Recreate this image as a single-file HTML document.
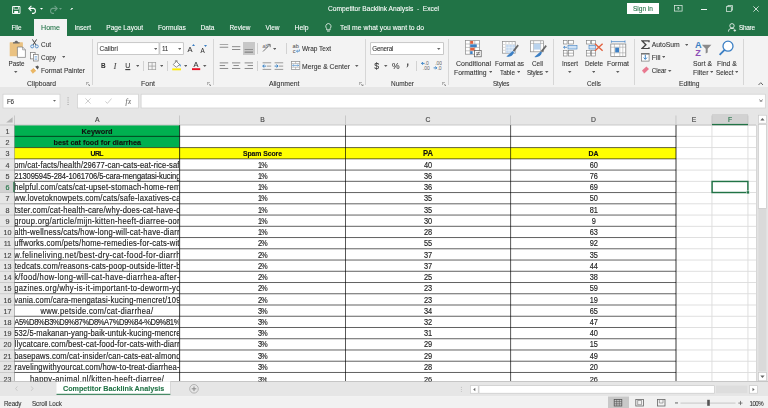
<!DOCTYPE html>
<html lang="en"><head><meta charset="utf-8"><title>Competitor Backlink Analysis - Excel</title>
<style>
html,body{margin:0;padding:0;}
body{width:768px;height:408px;overflow:hidden;background:#fff;font-family:"Liberation Sans", sans-serif;}
#app{position:relative;width:768px;height:408px;overflow:hidden;}
#app>div,#app>svg,#tx>span{position:absolute;display:block;}
#tx{left:0;top:0;width:768px;height:408px;will-change:transform;}
#tx>span{white-space:pre;-webkit-text-stroke:0.08px currentColor;line-height:10px;height:10px;transform:scaleY(1.08);transform-origin:50% 72%;}
</style></head><body><div id="app">
<div style="left:0px;top:0px;width:768px;height:36px;background:#217346;"></div>
<div style="left:0px;top:36px;width:768px;height:51px;background:#f3f3f3;"></div>
<div style="left:0px;top:87px;width:768px;height:27px;background:#e6e6e6;"></div>
<div style="left:34px;top:19px;width:33px;height:17px;background:#f3f3f3;"></div>
<svg style="left:0px;top:0px" width="768" height="112" viewBox="0 0 768 112"><rect x="3" y="94.2" width="57" height="13.8" fill="#fff" stroke="#cfcfcf" stroke-width="0.7"/><rect x="77.6" y="94.2" width="60.8" height="13.8" fill="#fff" stroke="#cfcfcf" stroke-width="0.7"/><rect x="141.1" y="94.2" width="624.2" height="13.8" fill="#fff" stroke="#cfcfcf" stroke-width="0.7"/></svg>
<svg style="left:0px;top:0px" width="768" height="408" viewBox="0 0 768 408"><rect x="0" y="114" width="768" height="267.4" fill="#e6e6e6"/><rect x="14.6" y="125.15" width="741.9" height="256.25" fill="#fff"/><rect x="712.0" y="114" width="36.0" height="10.4" fill="#d2d2d2"/><rect x="0" y="181.37" width="14.0" height="11.244" fill="#d2d2d2"/><rect x="13.299999999999999" y="181.37" width="1.4" height="11.244" fill="#217346"/><rect x="14.6" y="125.15" width="165.0" height="22.488" fill="#00b050"/><rect x="14.6" y="147.64" width="661.4" height="11.244" fill="#ffff00"/><rect x="676.0" y="124.65" width="80.5" height="0.9" fill="#dcdcdc"/><rect x="676.0" y="135.89" width="80.5" height="0.9" fill="#dcdcdc"/><rect x="676.0" y="147.14" width="80.5" height="0.9" fill="#dcdcdc"/><rect x="676.0" y="158.38" width="80.5" height="0.9" fill="#dcdcdc"/><rect x="676.0" y="169.63" width="80.5" height="0.9" fill="#dcdcdc"/><rect x="676.0" y="180.87" width="80.5" height="0.9" fill="#dcdcdc"/><rect x="676.0" y="192.11" width="80.5" height="0.9" fill="#dcdcdc"/><rect x="676.0" y="203.36" width="80.5" height="0.9" fill="#dcdcdc"/><rect x="676.0" y="214.6" width="80.5" height="0.9" fill="#dcdcdc"/><rect x="676.0" y="225.85" width="80.5" height="0.9" fill="#dcdcdc"/><rect x="676.0" y="237.09" width="80.5" height="0.9" fill="#dcdcdc"/><rect x="676.0" y="248.33" width="80.5" height="0.9" fill="#dcdcdc"/><rect x="676.0" y="259.58" width="80.5" height="0.9" fill="#dcdcdc"/><rect x="676.0" y="270.82" width="80.5" height="0.9" fill="#dcdcdc"/><rect x="676.0" y="282.07" width="80.5" height="0.9" fill="#dcdcdc"/><rect x="676.0" y="293.31" width="80.5" height="0.9" fill="#dcdcdc"/><rect x="676.0" y="304.55" width="80.5" height="0.9" fill="#dcdcdc"/><rect x="676.0" y="315.8" width="80.5" height="0.9" fill="#dcdcdc"/><rect x="676.0" y="327.04" width="80.5" height="0.9" fill="#dcdcdc"/><rect x="676.0" y="338.29" width="80.5" height="0.9" fill="#dcdcdc"/><rect x="676.0" y="349.53" width="80.5" height="0.9" fill="#dcdcdc"/><rect x="676.0" y="360.77" width="80.5" height="0.9" fill="#dcdcdc"/><rect x="676.0" y="372.02" width="80.5" height="0.9" fill="#dcdcdc"/><rect x="711.5" y="125.15" width="0.9" height="256.25" fill="#dcdcdc"/><rect x="747.5" y="125.15" width="0.9" height="256.25" fill="#dcdcdc"/><rect x="14.1" y="115.5" width="0.9" height="9.5" fill="#c4c4c4"/><rect x="179.1" y="115.5" width="0.9" height="9.5" fill="#c4c4c4"/><rect x="345.0" y="115.5" width="0.9" height="9.5" fill="#c4c4c4"/><rect x="510.1" y="115.5" width="0.9" height="9.5" fill="#c4c4c4"/><rect x="675.5" y="115.5" width="0.9" height="9.5" fill="#c4c4c4"/><rect x="711.5" y="115.5" width="0.9" height="9.5" fill="#c4c4c4"/><rect x="747.5" y="115.5" width="0.9" height="9.5" fill="#c4c4c4"/><rect x="0" y="124.6" width="756.5" height="0.8" fill="#c0c0c0"/><rect x="0" y="135.94" width="14.6" height="0.8" fill="#c4c4c4"/><rect x="0" y="147.19" width="14.6" height="0.8" fill="#c4c4c4"/><rect x="0" y="158.43" width="14.6" height="0.8" fill="#c4c4c4"/><rect x="0" y="169.68" width="14.6" height="0.8" fill="#c4c4c4"/><rect x="0" y="180.92000000000002" width="14.6" height="0.8" fill="#c4c4c4"/><rect x="0" y="192.16000000000003" width="14.6" height="0.8" fill="#c4c4c4"/><rect x="0" y="203.41000000000003" width="14.6" height="0.8" fill="#c4c4c4"/><rect x="0" y="214.65" width="14.6" height="0.8" fill="#c4c4c4"/><rect x="0" y="225.9" width="14.6" height="0.8" fill="#c4c4c4"/><rect x="0" y="237.14000000000001" width="14.6" height="0.8" fill="#c4c4c4"/><rect x="0" y="248.38000000000002" width="14.6" height="0.8" fill="#c4c4c4"/><rect x="0" y="259.63" width="14.6" height="0.8" fill="#c4c4c4"/><rect x="0" y="270.87" width="14.6" height="0.8" fill="#c4c4c4"/><rect x="0" y="282.12" width="14.6" height="0.8" fill="#c4c4c4"/><rect x="0" y="293.36" width="14.6" height="0.8" fill="#c4c4c4"/><rect x="0" y="304.6" width="14.6" height="0.8" fill="#c4c4c4"/><rect x="0" y="315.85" width="14.6" height="0.8" fill="#c4c4c4"/><rect x="0" y="327.09000000000003" width="14.6" height="0.8" fill="#c4c4c4"/><rect x="0" y="338.34000000000003" width="14.6" height="0.8" fill="#c4c4c4"/><rect x="0" y="349.58" width="14.6" height="0.8" fill="#c4c4c4"/><rect x="0" y="360.82" width="14.6" height="0.8" fill="#c4c4c4"/><rect x="0" y="372.07" width="14.6" height="0.8" fill="#c4c4c4"/><rect x="14.6" y="135.83999999999997" width="661.4" height="1" fill="#000" fill-opacity="0.62"/><rect x="14.6" y="147.08999999999997" width="661.4" height="1" fill="#000" fill-opacity="0.62"/><rect x="14.6" y="158.32999999999998" width="661.4" height="1" fill="#000" fill-opacity="0.62"/><rect x="14.6" y="169.57999999999998" width="661.4" height="1" fill="#000" fill-opacity="0.62"/><rect x="14.6" y="180.82" width="661.4" height="1" fill="#000" fill-opacity="0.62"/><rect x="14.6" y="192.06" width="661.4" height="1" fill="#000" fill-opacity="0.62"/><rect x="14.6" y="203.31" width="661.4" height="1" fill="#000" fill-opacity="0.62"/><rect x="14.6" y="214.54999999999998" width="661.4" height="1" fill="#000" fill-opacity="0.62"/><rect x="14.6" y="225.79999999999998" width="661.4" height="1" fill="#000" fill-opacity="0.62"/><rect x="14.6" y="237.04" width="661.4" height="1" fill="#000" fill-opacity="0.62"/><rect x="14.6" y="248.28" width="661.4" height="1" fill="#000" fill-opacity="0.62"/><rect x="14.6" y="259.53" width="661.4" height="1" fill="#000" fill-opacity="0.62"/><rect x="14.6" y="270.77" width="661.4" height="1" fill="#000" fill-opacity="0.62"/><rect x="14.6" y="282.02" width="661.4" height="1" fill="#000" fill-opacity="0.62"/><rect x="14.6" y="293.26" width="661.4" height="1" fill="#000" fill-opacity="0.62"/><rect x="14.6" y="304.5" width="661.4" height="1" fill="#000" fill-opacity="0.62"/><rect x="14.6" y="315.75" width="661.4" height="1" fill="#000" fill-opacity="0.62"/><rect x="14.6" y="326.99" width="661.4" height="1" fill="#000" fill-opacity="0.62"/><rect x="14.6" y="338.24" width="661.4" height="1" fill="#000" fill-opacity="0.62"/><rect x="14.6" y="349.47999999999996" width="661.4" height="1" fill="#000" fill-opacity="0.62"/><rect x="14.6" y="360.71999999999997" width="661.4" height="1" fill="#000" fill-opacity="0.62"/><rect x="14.6" y="371.96999999999997" width="661.4" height="1" fill="#000" fill-opacity="0.62"/><rect x="14.2" y="125.15" width="0.8" height="256.25" fill="#000" fill-opacity="0.3"/><rect x="179.075" y="125.15" width="1.05" height="256.25" fill="#000" fill-opacity="0.72"/><rect x="345.0" y="125.15" width="1.0" height="256.25" fill="#000" fill-opacity="0.65"/><rect x="510.1" y="125.15" width="1.0" height="256.25" fill="#000" fill-opacity="0.65"/><rect x="675.45" y="125.15" width="1.1" height="256.25" fill="#000" fill-opacity="0.7"/><rect x="712.0" y="123.9" width="36.0" height="1.3" fill="#217346"/><path d="M12.6 117.2V122.6H6.2Z" fill="#b4b4b4"/><rect x="712.1" y="181.47" width="35.8" height="11.044" fill="none" stroke="#217346" stroke-width="1.45"/><rect x="746.3" y="190.91000000000003" width="3" height="3" fill="#217346" stroke="#fff" stroke-width="0.5"/></svg>
<div style="left:756px;top:114px;width:12px;height:268px;background:#e6e6e6;"></div>
<svg style="left:0px;top:0px" width="768" height="408" viewBox="0 0 768 408"><rect x="756.3" y="125" width="0.8" height="256.4" fill="#cfcfcf"/><rect x="758.4" y="208.3" width="8" height="163" fill="#dadada"/><rect x="758.6" y="115.2" width="7.7" height="8" fill="#fff" stroke="#c4c4c4" stroke-width="0.6"/><rect x="758.6" y="124.6" width="7.7" height="83.7" fill="#fff" stroke="#c4c4c4" stroke-width="0.6"/><rect x="758.6" y="372.6" width="7.7" height="8.2" fill="#fff" stroke="#c4c4c4" stroke-width="0.6"/><path d="M760.3 120.4L762.45 118.1L764.6 120.4Z" fill="#666"/><path d="M760.3 375.6H764.6L762.45 378Z" fill="#666"/></svg>
<svg style="left:0px;top:0px" width="768" height="408" viewBox="0 0 768 408"><rect x="0" y="381.3" width="768" height="15.2" fill="#e6e6e6"/><rect x="0" y="381.1" width="768" height="0.8" fill="#bdbdbd"/><rect x="56.5" y="381.3" width="113.9" height="13" fill="#fff"/><rect x="56.5" y="393.8" width="113.9" height="1" fill="#217346"/><rect x="170.2" y="381.3" width="0.6" height="12.6" fill="#c6c6c6"/><path d="M17.4 386.4L15.6 388.6L17.4 390.8" stroke="#c0c0c0" stroke-width="0.8" fill="none"/><path d="M31.2 386.4L33 388.6L31.2 390.8" stroke="#c0c0c0" stroke-width="0.8" fill="none"/><circle cx="194" cy="388.8" r="4.3" fill="none" stroke="#a6a6a6" stroke-width="0.8"/><path d="M194 386.5V391.1M191.7 388.8H196.3" stroke="#888" stroke-width="1"/><rect x="716" y="385.6" width="31.3" height="7.6" fill="#dddddd"/><rect x="479" y="385.7" width="235.4" height="7.5" fill="#fff" stroke="#c4c4c4" stroke-width="0.6"/><rect x="470.4" y="385.7" width="7.8" height="7.5" fill="#fff" stroke="#c4c4c4" stroke-width="0.6"/><rect x="749.5" y="385.7" width="7.8" height="7.5" fill="#fff" stroke="#c4c4c4" stroke-width="0.6"/><path d="M475.3 387.7V391.3L473.2 389.5Z" fill="#666"/><path d="M752.5 387.7V391.3L754.6 389.5Z" fill="#666"/><circle cx="461.3" cy="387.2" r="0.45" fill="#999"/><circle cx="461.3" cy="389.4" r="0.45" fill="#999"/><circle cx="461.3" cy="391.6" r="0.45" fill="#999"/></svg>
<svg style="left:0px;top:0px" width="768" height="408" viewBox="0 0 768 408"><rect x="0" y="396.5" width="768" height="11.5" fill="#f1f1f1"/><rect x="608" y="396.5" width="21" height="11.5" fill="#c8c8c8"/><g fill="none" stroke="#555"><rect x="614.2" y="399.4" width="7.6" height="6.6" stroke-width="0.8"/><path d="M614.2 401.6H621.8M614.2 403.8H621.8M616.7 399.4V406M619.3 399.4V406" stroke-width="0.6"/><rect x="635.8" y="399.4" width="7.6" height="6.6" stroke-width="0.8" stroke="#666"/><rect x="637.8" y="400.6" width="3.6" height="4.2" stroke-width="0.6" stroke="#777"/><rect x="657.4" y="399.4" width="7.6" height="6.6" stroke-width="0.8" stroke="#666"/><path d="M659.4 399.4V403H663V399.4" stroke-width="0.6" stroke="#777"/></g><rect x="680.5" y="402.75" width="55" height="0.6" fill="#ababab"/><rect x="707.2" y="399.8" width="2.6" height="6" fill="#555"/><rect x="675" y="402.5" width="3" height="0.9" fill="#555"/><rect x="738.3" y="402.7" width="4.2" height="0.7" fill="#555"/><rect x="740.05" y="400.9" width="0.7" height="4.2" fill="#555"/></svg>
<div style="left:627px;top:3.3px;width:32.3px;height:10.5px;background:#fff;"></div>
<svg style="left:673.6px;top:5.2px" width="9" height="7" viewBox="0 0 9 7"><rect x="0.5" y="0.5" width="7.6" height="5.6" fill="none" stroke="#fff" stroke-width="0.7" stroke-opacity="0.9"/><path d="M4.3 4.8V2.3M3.1 3.4L4.3 2.1L5.5 3.4" stroke="#fff" stroke-width="0.7" fill="none"/></svg>
<div style="left:701.2px;top:8.6px;width:5.6px;height:0.7px;background:#f0f5f2;"></div>
<svg style="left:726px;top:5px" width="7" height="7" viewBox="0 0 7 7"><rect x="0.5" y="1.7" width="4.8" height="4.8" fill="none" stroke="#fff" stroke-width="0.7" stroke-opacity="0.9"/><path d="M1.8 1.7V0.5H6.5V5.2H5.3" fill="none" stroke="#fff" stroke-width="0.7" stroke-opacity="0.9"/></svg>
<svg style="left:752.5px;top:5.7px" width="6" height="6" viewBox="0 0 6 6"><path d="M0.4 0.4L5.6 5.6M5.6 0.4L0.4 5.6" stroke="#fff" stroke-width="0.75"/></svg>
<svg style="left:12px;top:5.5px" width="8.5" height="8" viewBox="0 0 8.5 8"><path d="M0.5 0.5H8V7.5H0.5Z" fill="none" stroke="#fff" stroke-width="0.9"/><rect x="2" y="0.6" width="4.5" height="2.6" fill="none" stroke="#fff" stroke-width="0.7"/><rect x="2.2" y="5" width="4" height="2.4" fill="#fff"/></svg>
<svg style="left:28px;top:4.5px" width="10" height="9" viewBox="0 0 10 9"><path d="M1 3.4H5.6A2.6 2.6 0 0 1 5.6 8.4H4" fill="none" stroke="#fff" stroke-width="1.1"/><path d="M3.4 0.8L0.8 3.4L3.4 6" fill="none" stroke="#fff" stroke-width="1.1"/></svg>
<svg style="left:39.7px;top:8.4px" width="3.0" height="1.8" viewBox="0 0 3.0 1.8"><path d="M0 0H3.0L1.5 1.8Z" fill="#fff"/></svg>
<svg style="left:48px;top:4.5px" width="10" height="9" viewBox="0 0 10 9"><path d="M9 3.4H4.4A2.6 2.6 0 0 0 4.4 8.4H6" fill="none" stroke="#6ea389" stroke-width="1.1"/><path d="M6.6 0.8L9.2 3.4L6.6 6" fill="none" stroke="#6ea389" stroke-width="1.1"/></svg>
<svg style="left:59.1px;top:8.4px" width="3.0" height="1.8" viewBox="0 0 3.0 1.8"><path d="M0 0H3.0L1.5 1.8Z" fill="#6ea389"/></svg>
<div style="left:70.5px;top:7.8px;width:2.2px;height:0.6px;background:#c9dcd1;"></div>
<svg style="left:70.4px;top:9.05px" width="2.4" height="1.3" viewBox="0 0 2.4 1.3"><path d="M0 0H2.4L1.2 1.3Z" fill="#c9dcd1"/></svg>
<svg style="left:325.4px;top:22.9px" width="7" height="9" viewBox="0 0 7 9"><path d="M3.4 0.5A2.9 2.9 0 0 1 5.2 5.4V6.8H1.6V5.4A2.9 2.9 0 0 1 3.4 0.5Z" fill="none" stroke="#fff" stroke-width="0.75"/><path d="M2 8.1H4.8" stroke="#fff" stroke-width="0.75"/></svg>
<svg style="left:727.5px;top:22.5px" width="9" height="9" viewBox="0 0 9 9"><circle cx="4" cy="2.8" r="2.2" fill="none" stroke="#fff" stroke-width="0.8"/><path d="M0.5 8.6C0.5 5.8 2.4 5.4 4 5.4C5 5.4 5.8 5.6 6.4 6" fill="none" stroke="#fff" stroke-width="0.8"/><path d="M6.8 6.2V8.8M5.5 7.5H8.1" stroke="#fff" stroke-width="0.7"/></svg>
<div style="left:92.25px;top:38.5px;width:0.6px;height:46.5px;background:#d6d6d6;"></div>
<div style="left:212.75px;top:38.5px;width:0.6px;height:46.5px;background:#d6d6d6;"></div>
<div style="left:364.75px;top:38.5px;width:0.6px;height:46.5px;background:#d6d6d6;"></div>
<div style="left:447.75px;top:38.5px;width:0.6px;height:46.5px;background:#d6d6d6;"></div>
<div style="left:553.25px;top:38.5px;width:0.6px;height:46.5px;background:#d6d6d6;"></div>
<div style="left:633.75px;top:38.5px;width:0.6px;height:46.5px;background:#d6d6d6;"></div>
<div style="left:742.75px;top:38.5px;width:0.6px;height:46.5px;background:#d6d6d6;"></div>
<div style="left:143.25px;top:61px;width:0.6px;height:10px;background:#d2d2d2;"></div>
<div style="left:166.75px;top:61px;width:0.6px;height:10px;background:#d2d2d2;"></div>
<div style="left:257.25px;top:43px;width:0.6px;height:11px;background:#d2d2d2;"></div>
<div style="left:257.25px;top:61px;width:0.6px;height:10px;background:#d2d2d2;"></div>
<div style="left:286.35px;top:43px;width:0.6px;height:11px;background:#d2d2d2;"></div>
<div style="left:416.25px;top:61px;width:0.6px;height:10px;background:#d2d2d2;"></div>
<svg style="left:85.5px;top:81.5px" width="4.5" height="4.5" viewBox="0 0 4.5 4.5"><path d="M0.3 3V0.3H3" fill="none" stroke="#777" stroke-width="0.6"/><path d="M1.6 1.6L4 4M4 2.2V4H2.2" fill="none" stroke="#777" stroke-width="0.6"/></svg>
<svg style="left:206.5px;top:81.5px" width="4.5" height="4.5" viewBox="0 0 4.5 4.5"><path d="M0.3 3V0.3H3" fill="none" stroke="#777" stroke-width="0.6"/><path d="M1.6 1.6L4 4M4 2.2V4H2.2" fill="none" stroke="#777" stroke-width="0.6"/></svg>
<svg style="left:359px;top:81.5px" width="4.5" height="4.5" viewBox="0 0 4.5 4.5"><path d="M0.3 3V0.3H3" fill="none" stroke="#777" stroke-width="0.6"/><path d="M1.6 1.6L4 4M4 2.2V4H2.2" fill="none" stroke="#777" stroke-width="0.6"/></svg>
<svg style="left:441.5px;top:81.5px" width="4.5" height="4.5" viewBox="0 0 4.5 4.5"><path d="M0.3 3V0.3H3" fill="none" stroke="#777" stroke-width="0.6"/><path d="M1.6 1.6L4 4M4 2.2V4H2.2" fill="none" stroke="#777" stroke-width="0.6"/></svg>
<svg style="left:757.5px;top:81.5px" width="5.5" height="3.5" viewBox="0 0 5.5 3.5"><path d="M0.5 3L2.75 0.7L5 3" fill="none" stroke="#555" stroke-width="0.9"/></svg>
<svg style="left:9px;top:40px" width="17.5" height="18" viewBox="0 0 17.5 18"><rect x="0.7" y="2.2" width="13.2" height="14" rx="0.5" fill="#eac282"/><path d="M4 3.6V2.2H5.6C5.6 0.2 9 0.2 9 2.2H10.6V3.6Z" fill="#6a6a6a"/><path d="M8.4 7H13.6L16.4 9.8V17.4H8.4Z" fill="#fff" stroke="#777" stroke-width="0.7"/><path d="M13.6 7V9.8H16.4" fill="none" stroke="#777" stroke-width="0.6"/></svg>
<svg style="left:14.45px;top:71.3px" width="3.5" height="2.0" viewBox="0 0 3.5 2.0"><path d="M0 0H3.5L1.75 2.0Z" fill="#5e5e5e"/></svg>
<svg style="left:30px;top:39px" width="9" height="9.5" viewBox="0 0 9 9.5"><path d="M2.4 0.4L6 6M6.6 0.4L3 6" stroke="#444" stroke-width="1"/><circle cx="2.2" cy="7.4" r="1.5" fill="none" stroke="#3b7fc4" stroke-width="0.8"/><circle cx="6.8" cy="7.4" r="1.5" fill="none" stroke="#3b7fc4" stroke-width="0.8"/></svg>
<svg style="left:30px;top:52px" width="9" height="9.5" viewBox="0 0 9 9.5"><rect x="0.5" y="0.5" width="4.6" height="6.4" fill="#fff" stroke="#777" stroke-width="0.7"/><rect x="3.4" y="2.6" width="4.8" height="6.4" fill="#fff" stroke="#777" stroke-width="0.7"/><path d="M4.6 4.6H7M4.6 6H7M4.6 7.4H7" stroke="#3b7fc4" stroke-width="0.5"/></svg>
<svg style="left:61.75px;top:56.3px" width="3.5" height="2.0" viewBox="0 0 3.5 2.0"><path d="M0 0H3.5L1.75 2.0Z" fill="#5e5e5e"/></svg>
<svg style="left:30px;top:64.5px" width="9.5" height="9.5" viewBox="0 0 9.5 9.5"><path d="M0.4 5.6L3.6 3L6.2 5.8L2.8 8.8Z" fill="#eab765"/><path d="M3.8 2.8L5 1.8L7.4 4.6L6.4 5.6Z" fill="#fff"/><path d="M5.2 1.8L7.6 0.4L9 2L7.6 4.4Z" fill="#555"/></svg>
<svg style="left:0px;top:0px" width="768" height="100" viewBox="0 0 768 100"><rect x="97.7" y="42.7" width="61.3" height="11.7" fill="#fff" stroke="#b4b4b4" stroke-width="0.7"/><rect x="159.9" y="42.7" width="23.4" height="11.7" fill="#fff" stroke="#b4b4b4" stroke-width="0.7"/><rect x="370.7" y="42.7" width="72.8" height="11.7" fill="#fff" stroke="#b4b4b4" stroke-width="0.7"/></svg>
<svg style="left:153.55px;top:47.8px" width="3.5" height="2.0" viewBox="0 0 3.5 2.0"><path d="M0 0H3.5L1.75 2.0Z" fill="#666"/></svg>
<svg style="left:177.55px;top:47.8px" width="3.5" height="2.0" viewBox="0 0 3.5 2.0"><path d="M0 0H3.5L1.75 2.0Z" fill="#666"/></svg>
<svg style="left:192.3px;top:44.2px" width="3" height="2" viewBox="0 0 3 2"><path d="M0 2L1.5 0L3 2Z" fill="#3b7fc4"/></svg>
<svg style="left:204.3px;top:45px" width="3" height="2" viewBox="0 0 3 2"><path d="M0 0H3L1.5 2Z" fill="#3b7fc4"/></svg>
<svg style="left:135.55px;top:64.8px" width="3.5" height="2.0" viewBox="0 0 3.5 2.0"><path d="M0 0H3.5L1.75 2.0Z" fill="#5e5e5e"/></svg>
<svg style="left:148px;top:61.5px" width="8.5" height="8.5" viewBox="0 0 8.5 8.5"><rect x="0.5" y="0.5" width="7.2" height="7.2" fill="none" stroke="#9a9a9a" stroke-width="0.7"/><path d="M4.1 0.5V7.7M0.5 4.1H7.7" stroke="#9a9a9a" stroke-width="0.7"/></svg>
<svg style="left:159.55px;top:64.8px" width="3.5" height="2.0" viewBox="0 0 3.5 2.0"><path d="M0 0H3.5L1.75 2.0Z" fill="#5e5e5e"/></svg>
<svg style="left:172px;top:60px" width="10" height="10.5" viewBox="0 0 10 10.5"><path d="M1.2 4.6L4.4 1.4L7.6 4.6L4.4 7.2Z" fill="#fff" stroke="#666" stroke-width="0.7"/><path d="M7.6 3.6C8.8 4.8 9.2 6 8.4 6.6C7.4 6 7.2 5 7.6 3.6Z" fill="#3b7fc4"/><path d="M3.4 2.4V0.6H5.2V2" fill="none" stroke="#666" stroke-width="0.6"/><rect x="0.2" y="8.4" width="8.8" height="1.9" fill="#ffeb00"/></svg>
<svg style="left:183.75px;top:64.8px" width="3.5" height="2.0" viewBox="0 0 3.5 2.0"><path d="M0 0H3.5L1.75 2.0Z" fill="#5e5e5e"/></svg>
<svg style="left:0px;top:0px" width="768" height="100" viewBox="0 0 768 100"><rect x="192" y="68.2" width="8.2" height="1.9" fill="#e81123"/></svg>
<svg style="left:203.25px;top:64.8px" width="3.5" height="2.0" viewBox="0 0 3.5 2.0"><path d="M0 0H3.5L1.75 2.0Z" fill="#5e5e5e"/></svg>
<div style="left:242.6px;top:42px;width:12.3px;height:12.8px;background:#c8c8c8;"></div>
<svg style="left:0px;top:0px" width="768" height="100" viewBox="0 0 768 100"><rect x="219.7" y="44.08" width="8.5" height="0.85" fill="#9a9a9a"/><rect x="219.7" y="46.78" width="8.5" height="0.85" fill="#7a7a7a"/><rect x="232" y="46.28" width="8.3" height="0.85" fill="#7a7a7a"/><rect x="232" y="49.08" width="8.3" height="0.85" fill="#7a7a7a"/><rect x="244.6" y="49.08" width="8.4" height="0.85" fill="#888"/><rect x="244.6" y="51.68" width="8.4" height="0.85" fill="#666"/><rect x="219.7" y="62.48" width="8.5" height="0.85" fill="#7a7a7a"/><rect x="219.7" y="65.17" width="5.4" height="0.85" fill="#7a7a7a"/><rect x="219.7" y="67.98" width="8.5" height="0.85" fill="#7a7a7a"/><rect x="232" y="62.48" width="8.3" height="0.85" fill="#7a7a7a"/><rect x="233.45000000000002" y="65.17" width="5.4" height="0.85" fill="#7a7a7a"/><rect x="232" y="67.98" width="8.3" height="0.85" fill="#7a7a7a"/><rect x="244.6" y="62.48" width="8.4" height="0.85" fill="#7a7a7a"/><rect x="247.6" y="65.17" width="5.4" height="0.85" fill="#7a7a7a"/><rect x="244.6" y="67.98" width="8.4" height="0.85" fill="#7a7a7a"/></svg>
<svg style="left:261.5px;top:43px" width="10" height="10" viewBox="0 0 10 10"><path d="M1 8.5L7.6 1.9" stroke="#555" stroke-width="0.8"/><path d="M5.4 1.4H8.2V4.2" fill="none" stroke="#555" stroke-width="0.8"/><text x="0.6" y="5" font-size="4.6" font-style="italic" fill="#555" font-family="Liberation Sans, sans-serif">ab</text></svg>
<svg style="left:272.55px;top:47.8px" width="3.5" height="2.0" viewBox="0 0 3.5 2.0"><path d="M0 0H3.5L1.75 2.0Z" fill="#5e5e5e"/></svg>
<svg style="left:261.5px;top:61.5px" width="10" height="9" viewBox="0 0 10 9"><path d="M0.6 0.8H9.2M5 4.1H9.2M0.6 7.4H9.2" stroke="#8a8a8a" stroke-width="0.85"/><path d="M4.2 4.1H0.8M2.3 2.6L0.7 4.1L2.3 5.6" stroke="#2b79c2" stroke-width="0.9" fill="none"/></svg>
<svg style="left:273.8px;top:61.5px" width="10" height="9" viewBox="0 0 10 9"><path d="M0.6 0.8H9.2M5 4.1H9.2M0.6 7.4H9.2" stroke="#8a8a8a" stroke-width="0.85"/><path d="M0.6 4.1H4M2.5 2.6L4.1 4.1L2.5 5.6" stroke="#2b79c2" stroke-width="0.9" fill="none"/></svg>
<svg style="left:291.5px;top:43.5px" width="9.5" height="9.5" viewBox="0 0 9.5 9.5"><text x="0.6" y="4.4" font-size="5.6" fill="#444" font-family="Liberation Sans, sans-serif">ab</text><text x="0.8" y="8.8" font-size="5.6" fill="#444" font-family="Liberation Sans, sans-serif">c</text><path d="M7.4 5.4V7.2H4.6M5.7 6.1L4.5 7.2L5.7 8.3" stroke="#2b79c2" stroke-width="0.7" fill="none"/></svg>
<svg style="left:291px;top:61px" width="9.5" height="9" viewBox="0 0 9.5 9"><rect x="0.4" y="0.4" width="8.4" height="8" fill="#fff" stroke="#8c8c8c" stroke-width="0.7"/><path d="M0.4 2.6H8.8M0.4 6.2H8.8M4.6 0.4V2.6M4.6 6.2V8.4" stroke="#9a9a9a" stroke-width="0.6"/><path d="M1.6 4.4H7.6M2.6 3.5L1.6 4.4L2.6 5.3M6.6 3.5L7.6 4.4L6.6 5.3" stroke="#2b79c2" stroke-width="0.6" fill="none"/></svg>
<svg style="left:355.25px;top:64.8px" width="3.5" height="2.0" viewBox="0 0 3.5 2.0"><path d="M0 0H3.5L1.75 2.0Z" fill="#5e5e5e"/></svg>
<svg style="left:437.45px;top:47.8px" width="3.5" height="2.0" viewBox="0 0 3.5 2.0"><path d="M0 0H3.5L1.75 2.0Z" fill="#666"/></svg>
<svg style="left:384.25px;top:64.8px" width="3.5" height="2.0" viewBox="0 0 3.5 2.0"><path d="M0 0H3.5L1.75 2.0Z" fill="#5e5e5e"/></svg>
<svg style="left:406px;top:63px" width="3" height="5" viewBox="0 0 3 5"><path d="M1.1 0.4H2.4V1.9C2.4 3 1.8 3.9 0.7 4.4L0.5 4C1.1 3.6 1.3 3.1 1.3 2.4H1.1Z" fill="#444"/></svg>
<svg style="left:420.5px;top:61px" width="9.5" height="9.5" viewBox="0 0 9.5 9.5"><text x="3.6" y="4.3" font-size="5" fill="#666" font-family="Liberation Sans, sans-serif">.0</text><text x="1.8" y="8.9" font-size="5" fill="#666" font-family="Liberation Sans, sans-serif">.00</text><path d="M3.6 2.4H0.6M1.9 1L0.5 2.4L1.9 3.8" stroke="#2b79c2" stroke-width="0.9" fill="none"/></svg>
<svg style="left:432.5px;top:61px" width="9.5" height="9.5" viewBox="0 0 9.5 9.5"><text x="2.2" y="4.3" font-size="5" fill="#666" font-family="Liberation Sans, sans-serif">.00</text><text x="4.4" y="8.9" font-size="5" fill="#666" font-family="Liberation Sans, sans-serif">.0</text><path d="M0.6 6.9H3.8M2.4 5.5L3.8 6.9L2.4 8.3" stroke="#2b79c2" stroke-width="0.9" fill="none"/></svg>
<svg style="left:465px;top:40px" width="17" height="17.5" viewBox="0 0 17 17.5"><rect x="0.6" y="0.6" width="14" height="13.6" fill="#fff" stroke="#8a8a8a" stroke-width="0.7"/><path d="M0.6 4H14.6M0.6 7.4H14.6M0.6 10.8H14.6M5 0.6V14.2M9.8 0.6V14.2" stroke="#8a8a8a" stroke-width="0.5"/><rect x="5.2" y="1" width="3" height="2.8" fill="#e2603d"/><rect x="5.2" y="4.4" width="6.6" height="2.8" fill="#3b7fc4"/><rect x="5.2" y="7.8" width="4.4" height="2.8" fill="#e2603d"/><rect x="5.2" y="11.2" width="2.4" height="2.8" fill="#3b7fc4"/><rect x="9.6" y="10.6" width="6.6" height="6.2" fill="#fff" stroke="#555" stroke-width="0.7"/><path d="M11 12.8H15M11 14.6H15M14.2 11.6L11.8 15.8" stroke="#444" stroke-width="0.6"/></svg>
<svg style="left:488.55px;top:71.1px" width="3.5" height="2.0" viewBox="0 0 3.5 2.0"><path d="M0 0H3.5L1.75 2.0Z" fill="#5e5e5e"/></svg>
<svg style="left:502px;top:40px" width="17" height="17.5" viewBox="0 0 17 17.5"><rect x="0.6" y="1.6" width="12.6" height="11.6" fill="#fff" stroke="#8a8a8a" stroke-width="0.7"/><path d="M0.6 4.5H13.2M0.6 7.4H13.2M0.6 10.3H13.2M3.8 1.6V13.2M7 1.6V13.2M10.2 1.6V13.2" stroke="#8a8a8a" stroke-width="0.5"/><rect x="3.9" y="4.6" width="9.2" height="8.5" fill="#c3d8ef"/><path d="M0.6 4.5H13.2M0.6 7.4H13.2M0.6 10.3H13.2M3.8 1.6V13.2M7 1.6V13.2M10.2 1.6V13.2" stroke="#fff" stroke-width="0.4"/><path d="M15.6 4.6L10.8 10.6L12.2 11.8L16.8 5.8Z" fill="#666"/><path d="M10.6 11L4.4 16.6C7.4 17.4 11 16 12 12.2Z" fill="#3b7fc4"/></svg>
<svg style="left:516.85px;top:71.1px" width="3.5" height="2.0" viewBox="0 0 3.5 2.0"><path d="M0 0H3.5L1.75 2.0Z" fill="#5e5e5e"/></svg>
<svg style="left:530px;top:40px" width="17" height="17.5" viewBox="0 0 17 17.5"><rect x="0.6" y="0.8" width="13" height="11" fill="#fff" stroke="#8a8a8a" stroke-width="0.7"/><path d="M0.6 3.4H13.6M3.6 0.8V11.8M10.6 0.8V11.8" stroke="#8a8a8a" stroke-width="0.5"/><rect x="3.8" y="3.6" width="6.6" height="6" fill="#b9d3ee"/><path d="M15.6 5L10.8 11L12.2 12.2L16.8 6.2Z" fill="#666"/><path d="M10.6 11.4L4.4 17C7.4 17.8 11 16.4 12 12.6Z" fill="#3b7fc4"/></svg>
<svg style="left:545.25px;top:71.1px" width="3.5" height="2.0" viewBox="0 0 3.5 2.0"><path d="M0 0H3.5L1.75 2.0Z" fill="#5e5e5e"/></svg>
<svg style="left:563px;top:40px" width="14.5" height="17" viewBox="0 0 14.5 17"><rect x="0.5" y="0.6" width="3.6" height="3.4" fill="#fff" stroke="#777" stroke-width="0.6"/><rect x="5.4" y="0.6" width="5" height="3.4" fill="#fff" stroke="#777" stroke-width="0.6"/><rect x="0.5" y="10.4" width="3.6" height="5.6" fill="#fff" stroke="#777" stroke-width="0.6"/><rect x="5.4" y="10.4" width="5" height="5.6" fill="#fff" stroke="#777" stroke-width="0.6"/><path d="M0.5 13.2H10.4" stroke="#777" stroke-width="0.5"/><rect x="5" y="5.6" width="9" height="3.4" fill="#cfe2f5" stroke="#3b7fc4" stroke-width="0.6"/><path d="M4 7.3H0.6M2 6L0.6 7.3L2 8.6" stroke="#3b7fc4" stroke-width="0.8" fill="none"/></svg>
<svg style="left:568.25px;top:71.1px" width="3.5" height="2.0" viewBox="0 0 3.5 2.0"><path d="M0 0H3.5L1.75 2.0Z" fill="#5e5e5e"/></svg>
<svg style="left:586px;top:40px" width="17.5" height="17" viewBox="0 0 17.5 17"><rect x="0.5" y="0.6" width="4" height="3.4" fill="#fff" stroke="#777" stroke-width="0.6"/><rect x="5.6" y="0.6" width="4" height="3.4" fill="#fff" stroke="#777" stroke-width="0.6"/><rect x="0.5" y="10.4" width="4" height="5.6" fill="#fff" stroke="#777" stroke-width="0.6"/><rect x="5.6" y="10.4" width="4" height="5.6" fill="#fff" stroke="#777" stroke-width="0.6"/><path d="M0.5 13.2H9.6" stroke="#777" stroke-width="0.5"/><rect x="3" y="5.6" width="6.4" height="3.4" fill="#cfe2f5" stroke="#3b7fc4" stroke-width="0.6"/><path d="M9 3.8L16.6 10.8M16.6 3.8L9 10.8" stroke="#e2603d" stroke-width="1.4"/></svg>
<svg style="left:591.75px;top:71.1px" width="3.5" height="2.0" viewBox="0 0 3.5 2.0"><path d="M0 0H3.5L1.75 2.0Z" fill="#5e5e5e"/></svg>
<svg style="left:609.5px;top:39.5px" width="17" height="17.5" viewBox="0 0 17 17.5"><path d="M1.4 1.6H15M1.4 0.4V2.8M15 0.4V2.8" stroke="#3b7fc4" stroke-width="0.7" fill="none"/><rect x="0.8" y="4" width="15" height="12.6" fill="#fff" stroke="#777" stroke-width="0.7"/><path d="M0.8 7.2H15.8M0.8 12.8H15.8M4.4 4V16.6M9.8 4V16.6M12.8 4V16.6" stroke="#999" stroke-width="0.5"/><rect x="5.2" y="7.6" width="3.8" height="4.8" fill="#3b7fc4"/></svg>
<svg style="left:616.25px;top:71.1px" width="3.5" height="2.0" viewBox="0 0 3.5 2.0"><path d="M0 0H3.5L1.75 2.0Z" fill="#5e5e5e"/></svg>
<svg style="left:640.5px;top:39.5px" width="9" height="9.5" viewBox="0 0 9 9.5"><path d="M8 2.2V0.8H0.9L4.9 4.7L0.9 8.6H8V7.2" fill="none" stroke="#444" stroke-width="1.35"/></svg>
<svg style="left:684.55px;top:43.6px" width="3.5" height="2.0" viewBox="0 0 3.5 2.0"><path d="M0 0H3.5L1.75 2.0Z" fill="#5e5e5e"/></svg>
<svg style="left:640.5px;top:52.5px" width="9" height="9" viewBox="0 0 9 9"><rect x="0.5" y="0.5" width="7.6" height="7.6" fill="#fff" stroke="#777" stroke-width="0.7"/><rect x="0.3" y="0.3" width="8" height="1.2" fill="#666"/><path d="M4.3 1.8V6.2M2.6 4.6L4.3 6.4L6 4.6" stroke="#2b79c2" stroke-width="0.9" fill="none"/></svg>
<svg style="left:661.55px;top:56.4px" width="3.5" height="2.0" viewBox="0 0 3.5 2.0"><path d="M0 0H3.5L1.75 2.0Z" fill="#5e5e5e"/></svg>
<svg style="left:640.5px;top:65px" width="9.5" height="9" viewBox="0 0 9.5 9"><path d="M1 5.6L5.4 1.4L8 4L3.6 8.2H2.8Z" fill="#e8788f"/><path d="M1 5.6L3.6 8.2H2.8Z" fill="#f7c5cf"/></svg>
<svg style="left:668.25px;top:69.5px" width="3.5" height="2.0" viewBox="0 0 3.5 2.0"><path d="M0 0H3.5L1.75 2.0Z" fill="#5e5e5e"/></svg>
<svg style="left:693.5px;top:40px" width="19" height="17.5" viewBox="0 0 19 17.5"><text x="0.9" y="7.7" font-size="9.2" font-weight="bold" fill="#3b7fc4" font-family="Liberation Sans, sans-serif">A</text><text x="1.3" y="15.8" font-size="9.2" font-weight="bold" fill="#8d4fb6" font-family="Liberation Sans, sans-serif">Z</text><path d="M7.8 4.8H17.4L13.7 8.8V12.6L11.7 13.6V8.8Z" fill="#8a8a8a"/></svg>
<svg style="left:709.55px;top:71.1px" width="3.5" height="2.0" viewBox="0 0 3.5 2.0"><path d="M0 0H3.5L1.75 2.0Z" fill="#5e5e5e"/></svg>
<svg style="left:718px;top:40px" width="17.5" height="17.5" viewBox="0 0 17.5 17.5"><circle cx="10" cy="6.2" r="5" fill="#fff" stroke="#3b7fc4" stroke-width="1.3"/><path d="M6.6 9.8L1.6 14.8" stroke="#3b7fc4" stroke-width="1.8"/></svg>
<svg style="left:734.85px;top:71.1px" width="3.5" height="2.0" viewBox="0 0 3.5 2.0"><path d="M0 0H3.5L1.75 2.0Z" fill="#5e5e5e"/></svg>
<svg style="left:52.5px;top:99.95px" width="3" height="1.7" viewBox="0 0 3 1.7"><path d="M0 0H3L1.5 1.7Z" fill="#666"/></svg>
<svg style="left:67.4px;top:97.2px" width="2" height="8" viewBox="0 0 2 8"><rect x="0.6" y="0.4" width="0.9" height="0.9" fill="#8a8a8a"/><rect x="0.6" y="2.6" width="0.9" height="0.9" fill="#8a8a8a"/><rect x="0.6" y="4.8" width="0.9" height="0.9" fill="#8a8a8a"/><rect x="0.6" y="7" width="0.9" height="0.9" fill="#8a8a8a"/></svg>
<svg style="left:85px;top:98px" width="6" height="6" viewBox="0 0 6 6"><path d="M0.4 0.4L5.6 5.6M5.6 0.4L0.4 5.6" stroke="#b8b8b8" stroke-width="0.7"/></svg>
<svg style="left:104.5px;top:98px" width="7" height="6" viewBox="0 0 7 6"><path d="M0.4 3.4L2.4 5.4L6.6 0.5" fill="none" stroke="#b8b8b8" stroke-width="0.7"/></svg>
<svg style="left:759px;top:99.2px" width="4" height="3.2" viewBox="0 0 4 3.2"><path d="M0.4 0.4L2 2L3.6 0.4M0.4 1.6L2 3.2L3.6 1.6" fill="none" stroke="#555" stroke-width="0.6"/></svg>
<div id="tx">
<span style="left:328px;top:4px;font-size:6.65px;color:#fff;letter-spacing:0.0px;">Competitor Backlink Analysis  -  Excel</span>
<span style="left:633px;top:4px;font-size:6.54px;color:#217346;letter-spacing:0.0px;">Sign in</span>
<span style="left:11.5px;top:23px;font-size:6.42px;color:#fff;letter-spacing:-0.111px;">File</span>
<span style="left:41px;top:23px;font-size:7.13px;color:#217346;letter-spacing:0.0px;">Home</span>
<span style="left:74.5px;top:23px;font-size:6.61px;color:#fff;letter-spacing:0.0px;">Insert</span>
<span style="left:106.3px;top:23px;font-size:6.54px;color:#fff;letter-spacing:0.0px;">Page Layout</span>
<span style="left:158px;top:23px;font-size:6.68px;color:#fff;letter-spacing:0.0px;">Formulas</span>
<span style="left:200.5px;top:23px;font-size:6.63px;color:#fff;letter-spacing:0.0px;">Data</span>
<span style="left:229.5px;top:23px;font-size:6.42px;color:#fff;letter-spacing:-0.002px;">Review</span>
<span style="left:265.5px;top:23px;font-size:6.52px;color:#fff;letter-spacing:0.0px;">View</span>
<span style="left:294.5px;top:23px;font-size:6.82px;color:#fff;letter-spacing:0.0px;">Help</span>
<span style="left:340px;top:23px;font-size:6.82px;color:#fff;letter-spacing:0.0px;">Tell me what you want to do</span>
<span style="left:739px;top:23px;font-size:6.42px;color:#fff;letter-spacing:-0.276px;">Share</span>
<span style="left:27px;top:79px;font-size:6.77px;color:#333;letter-spacing:0.0px;">Clipboard</span>
<span style="left:141px;top:79px;font-size:6.99px;color:#333;letter-spacing:0.0px;">Font</span>
<span style="left:269px;top:79px;font-size:6.86px;color:#333;letter-spacing:0.0px;">Alignment</span>
<span style="left:391px;top:79px;font-size:6.46px;color:#333;letter-spacing:0.0px;">Number</span>
<span style="left:493px;top:79px;font-size:6.28px;color:#333;letter-spacing:-0.121px;">Styles</span>
<span style="left:587px;top:79px;font-size:6.29px;color:#333;letter-spacing:0.0px;">Cells</span>
<span style="left:679px;top:79px;font-size:6.7px;color:#333;letter-spacing:0.0px;">Editing</span>
<span style="left:8.5px;top:59px;font-size:6.28px;color:#333;letter-spacing:-0.014px;">Paste</span>
<span style="left:41px;top:40px;font-size:6.42px;color:#333;letter-spacing:0.0px;">Cut</span>
<span style="left:41px;top:53px;font-size:6.42px;color:#333;letter-spacing:0.0px;">Copy</span>
<span style="left:41px;top:66px;font-size:6.65px;color:#333;letter-spacing:0.0px;">Format Painter</span>
<span style="left:99.5px;top:44px;font-size:6.52px;color:#333;letter-spacing:0.0px;">Calibri</span>
<span style="left:162px;top:44px;font-size:6.28px;color:#333;letter-spacing:-0.225px;">11</span>
<span style="left:187.5px;top:45px;font-size:7.5px;color:#333;letter-spacing:0.0px;">A</span>
<span style="left:200.5px;top:46px;font-size:6.28px;color:#333;letter-spacing:0.0px;">A</span>
<span style="left:101px;top:61px;font-size:6.42px;color:#333;font-weight:bold;letter-spacing:-0.335px;">B</span>
<span style="left:113.8px;top:62px;font-size:7.63px;color:#333;font-style:italic;letter-spacing:1.049px;font-family:'Liberation Serif',serif;">I</span>
<span style="left:125.3px;top:61px;font-size:6.91px;color:#333;letter-spacing:0.0px;text-decoration:underline;text-underline-offset:0.6px;">U</span>
<span style="left:193.4px;top:60px;font-size:7.42px;color:#333;letter-spacing:0.448px;">A</span>
<span style="left:302px;top:44px;font-size:6.49px;color:#333;letter-spacing:0.0px;">Wrap Text</span>
<span style="left:302px;top:62px;font-size:6.8px;color:#333;letter-spacing:0.0px;">Merge &amp; Center</span>
<span style="left:372.3px;top:44px;font-size:6.28px;color:#333;letter-spacing:-0.189px;">General</span>
<span style="left:374.3px;top:61px;font-size:8.79px;color:#333;letter-spacing:0.0px;">$</span>
<span style="left:392px;top:61px;font-size:8.57px;color:#333;letter-spacing:0.0px;">%</span>
<span style="left:456px;top:59px;font-size:6.99px;color:#333;letter-spacing:0.0px;">Conditional</span>
<span style="left:454px;top:68px;font-size:6.8px;color:#333;letter-spacing:0.0px;">Formatting</span>
<span style="left:495px;top:59px;font-size:6.44px;color:#333;letter-spacing:0.0px;">Format as</span>
<span style="left:500px;top:68px;font-size:6.28px;color:#333;letter-spacing:-0.003px;">Table</span>
<span style="left:532px;top:59px;font-size:6.38px;color:#333;letter-spacing:0.0px;">Cell</span>
<span style="left:527px;top:68px;font-size:6.28px;color:#333;letter-spacing:-0.221px;">Styles</span>
<span style="left:562px;top:59px;font-size:6.39px;color:#333;letter-spacing:0.0px;">Insert</span>
<span style="left:585px;top:59px;font-size:6.28px;color:#333;letter-spacing:-0.03px;">Delete</span>
<span style="left:607px;top:59px;font-size:6.94px;color:#333;letter-spacing:0.0px;">Format</span>
<span style="left:651.8px;top:40px;font-size:6.81px;color:#333;letter-spacing:0.0px;">AutoSum</span>
<span style="left:651.8px;top:53px;font-size:6.81px;color:#333;letter-spacing:0.0px;">Fill</span>
<span style="left:651.8px;top:66px;font-size:6.28px;color:#333;letter-spacing:-0.078px;">Clear</span>
<span style="left:693px;top:59px;font-size:6.83px;color:#333;letter-spacing:-0.0px;">Sort &amp;</span>
<span style="left:693px;top:68px;font-size:6.98px;color:#333;letter-spacing:-0.0px;">Filter</span>
<span style="left:717px;top:59px;font-size:6.92px;color:#333;letter-spacing:0.0px;">Find &amp;</span>
<span style="left:716px;top:68px;font-size:6.29px;color:#333;letter-spacing:0.0px;">Select</span>
<span style="left:7px;top:97px;font-size:6.28px;color:#333;letter-spacing:-0.338px;">F6</span>
<span style="left:125.5px;top:97px;font-size:7.0px;color:#666;font-style:italic;letter-spacing:0.448px;font-family:'Liberation Serif',serif;">fx</span>
<span style="left:63px;top:384px;font-size:7.2px;color:#217346;font-weight:bold;letter-spacing:0.0px;">Competitor Backlink Analysis</span>
<span style="left:4px;top:399px;font-size:6.28px;color:#333;letter-spacing:-0.162px;">Ready</span>
<span style="left:32px;top:399px;font-size:6.28px;color:#333;letter-spacing:-0.07px;">Scroll Lock</span>
<span style="left:749.4px;top:399px;font-size:6.1px;color:#333;letter-spacing:-0.398px;transform:scaleY(1.12);transform-origin:50% 70%;">100%</span>
<span style="left:94.93px;top:115px;font-size:6.8px;color:#444;-webkit-text-stroke:0.13px currentColor;">A</span>
<span style="left:260.23px;top:115px;font-size:6.8px;color:#444;-webkit-text-stroke:0.13px currentColor;">B</span>
<span style="left:425.54px;top:115px;font-size:6.8px;color:#444;-webkit-text-stroke:0.13px currentColor;">C</span>
<span style="left:590.94px;top:115px;font-size:6.8px;color:#444;-webkit-text-stroke:0.13px currentColor;">D</span>
<span style="left:691.73px;top:115px;font-size:6.8px;color:#444;-webkit-text-stroke:0.13px currentColor;">E</span>
<span style="left:727.92px;top:115px;font-size:6.8px;color:#217346;-webkit-text-stroke:0.13px currentColor;">F</span>
<span style="left:5.4px;top:127px;font-size:7.2px;color:#444;-webkit-text-stroke:0.13px currentColor;transform:scaleY(1.12);transform-origin:50% 72%;">1</span>
<span style="left:5.4px;top:138px;font-size:7.2px;color:#444;-webkit-text-stroke:0.13px currentColor;transform:scaleY(1.12);transform-origin:50% 72%;">2</span>
<span style="left:5.4px;top:149px;font-size:7.2px;color:#444;-webkit-text-stroke:0.13px currentColor;transform:scaleY(1.12);transform-origin:50% 72%;">3</span>
<span style="left:5.4px;top:161px;font-size:7.2px;color:#444;-webkit-text-stroke:0.13px currentColor;transform:scaleY(1.12);transform-origin:50% 72%;">4</span>
<span style="left:5.4px;top:172px;font-size:7.2px;color:#444;-webkit-text-stroke:0.13px currentColor;transform:scaleY(1.12);transform-origin:50% 72%;">5</span>
<span style="left:5.4px;top:183px;font-size:7.2px;color:#217346;-webkit-text-stroke:0.13px currentColor;transform:scaleY(1.12);transform-origin:50% 72%;">6</span>
<span style="left:5.4px;top:194px;font-size:7.2px;color:#444;-webkit-text-stroke:0.13px currentColor;transform:scaleY(1.12);transform-origin:50% 72%;">7</span>
<span style="left:5.4px;top:206px;font-size:7.2px;color:#444;-webkit-text-stroke:0.13px currentColor;transform:scaleY(1.12);transform-origin:50% 72%;">8</span>
<span style="left:5.4px;top:217px;font-size:7.2px;color:#444;-webkit-text-stroke:0.13px currentColor;transform:scaleY(1.12);transform-origin:50% 72%;">9</span>
<span style="left:3.4px;top:228px;font-size:7.2px;color:#444;-webkit-text-stroke:0.13px currentColor;transform:scaleY(1.12);transform-origin:50% 72%;">10</span>
<span style="left:3.67px;top:239px;font-size:7.2px;color:#444;-webkit-text-stroke:0.13px currentColor;transform:scaleY(1.12);transform-origin:50% 72%;">11</span>
<span style="left:3.4px;top:251px;font-size:7.2px;color:#444;-webkit-text-stroke:0.13px currentColor;transform:scaleY(1.12);transform-origin:50% 72%;">12</span>
<span style="left:3.4px;top:262px;font-size:7.2px;color:#444;-webkit-text-stroke:0.13px currentColor;transform:scaleY(1.12);transform-origin:50% 72%;">13</span>
<span style="left:3.4px;top:273px;font-size:7.2px;color:#444;-webkit-text-stroke:0.13px currentColor;transform:scaleY(1.12);transform-origin:50% 72%;">14</span>
<span style="left:3.4px;top:284px;font-size:7.2px;color:#444;-webkit-text-stroke:0.13px currentColor;transform:scaleY(1.12);transform-origin:50% 72%;">15</span>
<span style="left:3.4px;top:296px;font-size:7.2px;color:#444;-webkit-text-stroke:0.13px currentColor;transform:scaleY(1.12);transform-origin:50% 72%;">16</span>
<span style="left:3.4px;top:307px;font-size:7.2px;color:#444;-webkit-text-stroke:0.13px currentColor;transform:scaleY(1.12);transform-origin:50% 72%;">17</span>
<span style="left:3.4px;top:318px;font-size:7.2px;color:#444;-webkit-text-stroke:0.13px currentColor;transform:scaleY(1.12);transform-origin:50% 72%;">18</span>
<span style="left:3.4px;top:329px;font-size:7.2px;color:#444;-webkit-text-stroke:0.13px currentColor;transform:scaleY(1.12);transform-origin:50% 72%;">19</span>
<span style="left:3.4px;top:340px;font-size:7.2px;color:#444;-webkit-text-stroke:0.13px currentColor;transform:scaleY(1.12);transform-origin:50% 72%;">20</span>
<span style="left:3.4px;top:352px;font-size:7.2px;color:#444;-webkit-text-stroke:0.13px currentColor;transform:scaleY(1.12);transform-origin:50% 72%;">21</span>
<span style="left:3.4px;top:363px;font-size:7.2px;color:#444;-webkit-text-stroke:0.13px currentColor;transform:scaleY(1.12);transform-origin:50% 72%;">22</span>
<span style="left:3.4px;top:375px;font-size:7.2px;color:#444;clip-path:inset(0 0 3.42px 0);-webkit-text-stroke:0.13px currentColor;">23</span>
<span style="left:81.5px;top:127px;font-size:7.35px;color:#111;font-weight:bold;letter-spacing:0.0px;-webkit-text-stroke:0.13px currentColor;">Keyword</span>
<span style="left:53.5px;top:138px;font-size:7.27px;color:#111;font-weight:bold;letter-spacing:0.0px;-webkit-text-stroke:0.13px currentColor;">best cat food for diarrhea</span>
<span style="left:90.5px;top:149px;font-size:6.88px;color:#111;font-weight:bold;letter-spacing:-0.569px;-webkit-text-stroke:0.13px currentColor;">URL</span>
<span style="left:243px;top:149px;font-size:6.88px;color:#111;font-weight:bold;letter-spacing:-0.083px;-webkit-text-stroke:0.13px currentColor;">Spam Score</span>
<span style="left:423px;top:149px;font-size:7.61px;color:#111;font-weight:bold;letter-spacing:0.0px;-webkit-text-stroke:0.13px currentColor;">PA</span>
<span style="left:588.5px;top:149px;font-size:6.92px;color:#111;font-weight:bold;letter-spacing:0.0px;-webkit-text-stroke:0.13px currentColor;">DA</span>
<span style="left:14.2px;top:161px;font-size:7.6px;color:#1c1c1c;letter-spacing:0.134px;clip-path:inset(0 0.40px 0 0.40px);-webkit-text-stroke:0.13px currentColor;transform:scaleY(1.18);transform-origin:50% 72%;">om/cat-facts/health/29677-can-cats-eat-rice-saf</span>
<span style="left:14.2px;top:172px;font-size:7.6px;color:#1c1c1c;letter-spacing:-0.109px;clip-path:inset(0 1.30px 0 0.40px);-webkit-text-stroke:0.13px currentColor;transform:scaleY(1.18);transform-origin:50% 72%;">213095945-284-1061706/5-cara-mengatasi-kucing</span>
<span style="left:14.2px;top:183px;font-size:7.6px;color:#1c1c1c;letter-spacing:0.229px;clip-path:inset(0 1.30px 0 0.40px);-webkit-text-stroke:0.13px currentColor;transform:scaleY(1.18);transform-origin:50% 72%;">helpful.com/cats/cat-upset-stomach-home-rem</span>
<span style="left:14.2px;top:194px;font-size:7.6px;color:#1c1c1c;letter-spacing:0.223px;clip-path:inset(0 1.30px 0 0.40px);-webkit-text-stroke:0.13px currentColor;transform:scaleY(1.18);transform-origin:50% 72%;">ww.lovetoknowpets.com/cats/safe-laxatives-ca</span>
<span style="left:14.8px;top:206px;font-size:7.6px;color:#1c1c1c;letter-spacing:0.205px;clip-path:inset(0 1.30px 0 0.00px);-webkit-text-stroke:0.13px currentColor;transform:scaleY(1.18);transform-origin:50% 72%;">tster.com/cat-health-care/why-does-cat-have-d</span>
<span style="left:14.2px;top:217px;font-size:7.6px;color:#1c1c1c;letter-spacing:0.318px;clip-path:inset(0 0.40px 0 0.40px);-webkit-text-stroke:0.13px currentColor;transform:scaleY(1.18);transform-origin:50% 72%;">group.org/article/mijn-kitten-heeft-diarree-oor</span>
<span style="left:14.2px;top:228px;font-size:7.6px;color:#1c1c1c;letter-spacing:0.217px;clip-path:inset(0 0.40px 0 0.40px);-webkit-text-stroke:0.13px currentColor;transform:scaleY(1.18);transform-origin:50% 72%;">alth-wellness/cats/how-long-will-cat-have-diarr</span>
<span style="left:14.2px;top:239px;font-size:7.6px;color:#1c1c1c;letter-spacing:0.226px;clip-path:inset(0 0.40px 0 0.40px);-webkit-text-stroke:0.13px currentColor;transform:scaleY(1.18);transform-origin:50% 72%;">uffworks.com/pets/home-remedies-for-cats-wit</span>
<span style="left:14.2px;top:251px;font-size:7.6px;color:#1c1c1c;letter-spacing:0.392px;clip-path:inset(0 1.30px 0 0.40px);-webkit-text-stroke:0.13px currentColor;transform:scaleY(1.18);transform-origin:50% 72%;">w.felineliving.net/best-dry-cat-food-for-diarrh</span>
<span style="left:14.8px;top:262px;font-size:7.6px;color:#1c1c1c;letter-spacing:0.2px;clip-path:inset(0 1.30px 0 0.00px);-webkit-text-stroke:0.13px currentColor;transform:scaleY(1.18);transform-origin:50% 72%;">tedcats.com/reasons-cats-poop-outside-litter-b</span>
<span style="left:14.2px;top:273px;font-size:7.6px;color:#1c1c1c;letter-spacing:0.371px;clip-path:inset(0 0.40px 0 0.40px);-webkit-text-stroke:0.13px currentColor;transform:scaleY(1.18);transform-origin:50% 72%;">k/food/how-long-will-cat-have-diarrhea-after-</span>
<span style="left:14.2px;top:284px;font-size:7.6px;color:#1c1c1c;letter-spacing:0.322px;clip-path:inset(0 1.30px 0 0.40px);-webkit-text-stroke:0.13px currentColor;transform:scaleY(1.18);transform-origin:50% 72%;">gazines.org/why-is-it-important-to-deworm-yo</span>
<span style="left:14.2px;top:296px;font-size:7.6px;color:#1c1c1c;letter-spacing:0.189px;clip-path:inset(0 1.30px 0 0.40px);-webkit-text-stroke:0.13px currentColor;transform:scaleY(1.18);transform-origin:50% 72%;">vania.com/cara-mengatasi-kucing-mencret/109</span>
<span style="left:14.2px;top:318px;font-size:7.6px;color:#1c1c1c;letter-spacing:-0.374px;clip-path:inset(0 1.30px 0 0.40px);-webkit-text-stroke:0.13px currentColor;transform:scaleY(1.18);transform-origin:50% 72%;">A5%D8%B3%D9%87%D8%A7%D9%84-%D9%81%</span>
<span style="left:14.2px;top:329px;font-size:7.6px;color:#1c1c1c;letter-spacing:0.108px;clip-path:inset(0 1.30px 0 0.40px);-webkit-text-stroke:0.13px currentColor;transform:scaleY(1.18);transform-origin:50% 72%;">532/5-makanan-yang-baik-untuk-kucing-mencre</span>
<span style="left:14.8px;top:340px;font-size:7.6px;color:#1c1c1c;letter-spacing:0.173px;clip-path:inset(0 0.40px 0 0.00px);-webkit-text-stroke:0.13px currentColor;transform:scaleY(1.18);transform-origin:50% 72%;">llycatcare.com/best-cat-food-for-cats-with-diarr</span>
<span style="left:14.2px;top:352px;font-size:7.6px;color:#1c1c1c;letter-spacing:0.165px;clip-path:inset(0 1.30px 0 0.40px);-webkit-text-stroke:0.13px currentColor;transform:scaleY(1.18);transform-origin:50% 72%;">basepaws.com/cat-insider/can-cats-eat-almond</span>
<span style="left:14.8px;top:363px;font-size:7.6px;color:#1c1c1c;letter-spacing:0.171px;clip-path:inset(0 0.40px 0 0.00px);-webkit-text-stroke:0.13px currentColor;transform:scaleY(1.18);transform-origin:50% 72%;">ravelingwithyourcat.com/how-to-treat-diarrhea-</span>
<span style="left:40.5px;top:307px;font-size:7.6px;color:#1c1c1c;letter-spacing:0.31px;-webkit-text-stroke:0.13px currentColor;transform:scaleY(1.18);transform-origin:50% 72%;">www.petside.com/cat-diarrhea/</span>
<span style="left:30px;top:375px;font-size:7.6px;color:#1c1c1c;letter-spacing:0.345px;clip-path:inset(0 0 3.42px 0);-webkit-text-stroke:0.13px currentColor;">happy-animal.nl/kitten-heeft-diarree/</span>
<span style="left:257.9px;top:161px;font-size:7.2px;color:#1c1c1c;letter-spacing:-0.691px;-webkit-text-stroke:0.13px currentColor;transform:scaleY(1.18);transform-origin:50% 72%;">1%</span>
<span style="left:423.98px;top:161px;font-size:7.4px;color:#1c1c1c;-webkit-text-stroke:0.13px currentColor;transform:scaleY(1.16);transform-origin:50% 72%;">40</span>
<span style="left:589.68px;top:161px;font-size:7.4px;color:#1c1c1c;-webkit-text-stroke:0.13px currentColor;transform:scaleY(1.16);transform-origin:50% 72%;">60</span>
<span style="left:257.9px;top:172px;font-size:7.2px;color:#1c1c1c;letter-spacing:-0.691px;-webkit-text-stroke:0.13px currentColor;transform:scaleY(1.18);transform-origin:50% 72%;">1%</span>
<span style="left:423.98px;top:172px;font-size:7.4px;color:#1c1c1c;-webkit-text-stroke:0.13px currentColor;transform:scaleY(1.16);transform-origin:50% 72%;">36</span>
<span style="left:589.68px;top:172px;font-size:7.4px;color:#1c1c1c;-webkit-text-stroke:0.13px currentColor;transform:scaleY(1.16);transform-origin:50% 72%;">76</span>
<span style="left:257.9px;top:183px;font-size:7.2px;color:#1c1c1c;letter-spacing:-0.691px;-webkit-text-stroke:0.13px currentColor;transform:scaleY(1.18);transform-origin:50% 72%;">1%</span>
<span style="left:423.98px;top:183px;font-size:7.4px;color:#1c1c1c;-webkit-text-stroke:0.13px currentColor;transform:scaleY(1.16);transform-origin:50% 72%;">36</span>
<span style="left:589.68px;top:183px;font-size:7.4px;color:#1c1c1c;-webkit-text-stroke:0.13px currentColor;transform:scaleY(1.16);transform-origin:50% 72%;">69</span>
<span style="left:257.9px;top:194px;font-size:7.2px;color:#1c1c1c;letter-spacing:-0.691px;-webkit-text-stroke:0.13px currentColor;transform:scaleY(1.18);transform-origin:50% 72%;">1%</span>
<span style="left:423.98px;top:194px;font-size:7.4px;color:#1c1c1c;-webkit-text-stroke:0.13px currentColor;transform:scaleY(1.16);transform-origin:50% 72%;">35</span>
<span style="left:589.68px;top:194px;font-size:7.4px;color:#1c1c1c;-webkit-text-stroke:0.13px currentColor;transform:scaleY(1.16);transform-origin:50% 72%;">50</span>
<span style="left:257.9px;top:206px;font-size:7.2px;color:#1c1c1c;letter-spacing:-0.691px;-webkit-text-stroke:0.13px currentColor;transform:scaleY(1.18);transform-origin:50% 72%;">1%</span>
<span style="left:423.98px;top:206px;font-size:7.4px;color:#1c1c1c;-webkit-text-stroke:0.13px currentColor;transform:scaleY(1.16);transform-origin:50% 72%;">35</span>
<span style="left:589.68px;top:206px;font-size:7.4px;color:#1c1c1c;-webkit-text-stroke:0.13px currentColor;transform:scaleY(1.16);transform-origin:50% 72%;">81</span>
<span style="left:257.9px;top:217px;font-size:7.2px;color:#1c1c1c;letter-spacing:-0.691px;-webkit-text-stroke:0.13px currentColor;transform:scaleY(1.18);transform-origin:50% 72%;">1%</span>
<span style="left:423.98px;top:217px;font-size:7.4px;color:#1c1c1c;-webkit-text-stroke:0.13px currentColor;transform:scaleY(1.16);transform-origin:50% 72%;">30</span>
<span style="left:591.74px;top:217px;font-size:7.4px;color:#1c1c1c;-webkit-text-stroke:0.13px currentColor;transform:scaleY(1.16);transform-origin:50% 72%;">9</span>
<span style="left:257.9px;top:228px;font-size:7.2px;color:#1c1c1c;letter-spacing:-0.691px;-webkit-text-stroke:0.13px currentColor;transform:scaleY(1.18);transform-origin:50% 72%;">1%</span>
<span style="left:423.98px;top:228px;font-size:7.4px;color:#1c1c1c;-webkit-text-stroke:0.13px currentColor;transform:scaleY(1.16);transform-origin:50% 72%;">28</span>
<span style="left:589.68px;top:228px;font-size:7.4px;color:#1c1c1c;-webkit-text-stroke:0.13px currentColor;transform:scaleY(1.16);transform-origin:50% 72%;">63</span>
<span style="left:257.9px;top:239px;font-size:7.2px;color:#1c1c1c;letter-spacing:-0.691px;-webkit-text-stroke:0.13px currentColor;transform:scaleY(1.18);transform-origin:50% 72%;">2%</span>
<span style="left:423.98px;top:239px;font-size:7.4px;color:#1c1c1c;-webkit-text-stroke:0.13px currentColor;transform:scaleY(1.16);transform-origin:50% 72%;">55</span>
<span style="left:589.68px;top:239px;font-size:7.4px;color:#1c1c1c;-webkit-text-stroke:0.13px currentColor;transform:scaleY(1.16);transform-origin:50% 72%;">92</span>
<span style="left:257.9px;top:251px;font-size:7.2px;color:#1c1c1c;letter-spacing:-0.691px;-webkit-text-stroke:0.13px currentColor;transform:scaleY(1.18);transform-origin:50% 72%;">2%</span>
<span style="left:423.98px;top:251px;font-size:7.4px;color:#1c1c1c;-webkit-text-stroke:0.13px currentColor;transform:scaleY(1.16);transform-origin:50% 72%;">37</span>
<span style="left:589.68px;top:251px;font-size:7.4px;color:#1c1c1c;-webkit-text-stroke:0.13px currentColor;transform:scaleY(1.16);transform-origin:50% 72%;">35</span>
<span style="left:257.9px;top:262px;font-size:7.2px;color:#1c1c1c;letter-spacing:-0.691px;-webkit-text-stroke:0.13px currentColor;transform:scaleY(1.18);transform-origin:50% 72%;">2%</span>
<span style="left:423.98px;top:262px;font-size:7.4px;color:#1c1c1c;-webkit-text-stroke:0.13px currentColor;transform:scaleY(1.16);transform-origin:50% 72%;">37</span>
<span style="left:589.68px;top:262px;font-size:7.4px;color:#1c1c1c;-webkit-text-stroke:0.13px currentColor;transform:scaleY(1.16);transform-origin:50% 72%;">44</span>
<span style="left:257.9px;top:273px;font-size:7.2px;color:#1c1c1c;letter-spacing:-0.691px;-webkit-text-stroke:0.13px currentColor;transform:scaleY(1.18);transform-origin:50% 72%;">2%</span>
<span style="left:423.98px;top:273px;font-size:7.4px;color:#1c1c1c;-webkit-text-stroke:0.13px currentColor;transform:scaleY(1.16);transform-origin:50% 72%;">25</span>
<span style="left:589.68px;top:273px;font-size:7.4px;color:#1c1c1c;-webkit-text-stroke:0.13px currentColor;transform:scaleY(1.16);transform-origin:50% 72%;">38</span>
<span style="left:257.9px;top:284px;font-size:7.2px;color:#1c1c1c;letter-spacing:-0.691px;-webkit-text-stroke:0.13px currentColor;transform:scaleY(1.18);transform-origin:50% 72%;">2%</span>
<span style="left:423.98px;top:284px;font-size:7.4px;color:#1c1c1c;-webkit-text-stroke:0.13px currentColor;transform:scaleY(1.16);transform-origin:50% 72%;">23</span>
<span style="left:589.68px;top:284px;font-size:7.4px;color:#1c1c1c;-webkit-text-stroke:0.13px currentColor;transform:scaleY(1.16);transform-origin:50% 72%;">59</span>
<span style="left:257.9px;top:296px;font-size:7.2px;color:#1c1c1c;letter-spacing:-0.691px;-webkit-text-stroke:0.13px currentColor;transform:scaleY(1.18);transform-origin:50% 72%;">2%</span>
<span style="left:423.98px;top:296px;font-size:7.4px;color:#1c1c1c;-webkit-text-stroke:0.13px currentColor;transform:scaleY(1.16);transform-origin:50% 72%;">23</span>
<span style="left:589.68px;top:296px;font-size:7.4px;color:#1c1c1c;-webkit-text-stroke:0.13px currentColor;transform:scaleY(1.16);transform-origin:50% 72%;">19</span>
<span style="left:257.9px;top:307px;font-size:7.2px;color:#1c1c1c;letter-spacing:-0.691px;-webkit-text-stroke:0.13px currentColor;transform:scaleY(1.18);transform-origin:50% 72%;">3%</span>
<span style="left:423.98px;top:307px;font-size:7.4px;color:#1c1c1c;-webkit-text-stroke:0.13px currentColor;transform:scaleY(1.16);transform-origin:50% 72%;">34</span>
<span style="left:589.68px;top:307px;font-size:7.4px;color:#1c1c1c;-webkit-text-stroke:0.13px currentColor;transform:scaleY(1.16);transform-origin:50% 72%;">65</span>
<span style="left:257.9px;top:318px;font-size:7.2px;color:#1c1c1c;letter-spacing:-0.691px;-webkit-text-stroke:0.13px currentColor;transform:scaleY(1.18);transform-origin:50% 72%;">3%</span>
<span style="left:423.98px;top:318px;font-size:7.4px;color:#1c1c1c;-webkit-text-stroke:0.13px currentColor;transform:scaleY(1.16);transform-origin:50% 72%;">32</span>
<span style="left:589.68px;top:318px;font-size:7.4px;color:#1c1c1c;-webkit-text-stroke:0.13px currentColor;transform:scaleY(1.16);transform-origin:50% 72%;">47</span>
<span style="left:257.9px;top:329px;font-size:7.2px;color:#1c1c1c;letter-spacing:-0.691px;-webkit-text-stroke:0.13px currentColor;transform:scaleY(1.18);transform-origin:50% 72%;">3%</span>
<span style="left:423.98px;top:329px;font-size:7.4px;color:#1c1c1c;-webkit-text-stroke:0.13px currentColor;transform:scaleY(1.16);transform-origin:50% 72%;">31</span>
<span style="left:589.68px;top:329px;font-size:7.4px;color:#1c1c1c;-webkit-text-stroke:0.13px currentColor;transform:scaleY(1.16);transform-origin:50% 72%;">40</span>
<span style="left:257.9px;top:340px;font-size:7.2px;color:#1c1c1c;letter-spacing:-0.691px;-webkit-text-stroke:0.13px currentColor;transform:scaleY(1.18);transform-origin:50% 72%;">3%</span>
<span style="left:423.98px;top:340px;font-size:7.4px;color:#1c1c1c;-webkit-text-stroke:0.13px currentColor;transform:scaleY(1.16);transform-origin:50% 72%;">29</span>
<span style="left:589.68px;top:340px;font-size:7.4px;color:#1c1c1c;-webkit-text-stroke:0.13px currentColor;transform:scaleY(1.16);transform-origin:50% 72%;">15</span>
<span style="left:257.9px;top:352px;font-size:7.2px;color:#1c1c1c;letter-spacing:-0.691px;-webkit-text-stroke:0.13px currentColor;transform:scaleY(1.18);transform-origin:50% 72%;">3%</span>
<span style="left:423.98px;top:352px;font-size:7.4px;color:#1c1c1c;-webkit-text-stroke:0.13px currentColor;transform:scaleY(1.16);transform-origin:50% 72%;">29</span>
<span style="left:589.68px;top:352px;font-size:7.4px;color:#1c1c1c;-webkit-text-stroke:0.13px currentColor;transform:scaleY(1.16);transform-origin:50% 72%;">49</span>
<span style="left:257.9px;top:363px;font-size:7.2px;color:#1c1c1c;letter-spacing:-0.691px;-webkit-text-stroke:0.13px currentColor;transform:scaleY(1.18);transform-origin:50% 72%;">3%</span>
<span style="left:423.98px;top:363px;font-size:7.4px;color:#1c1c1c;-webkit-text-stroke:0.13px currentColor;transform:scaleY(1.16);transform-origin:50% 72%;">28</span>
<span style="left:589.68px;top:363px;font-size:7.4px;color:#1c1c1c;-webkit-text-stroke:0.13px currentColor;transform:scaleY(1.16);transform-origin:50% 72%;">20</span>
<span style="left:257.9px;top:375px;font-size:7.2px;color:#1c1c1c;letter-spacing:-0.691px;clip-path:inset(0 0 3.42px 0);-webkit-text-stroke:0.13px currentColor;">3%</span>
<span style="left:423.98px;top:375px;font-size:7.4px;color:#1c1c1c;clip-path:inset(0 0 3.42px 0);-webkit-text-stroke:0.13px currentColor;">26</span>
<span style="left:589.68px;top:375px;font-size:7.4px;color:#1c1c1c;clip-path:inset(0 0 3.42px 0);-webkit-text-stroke:0.13px currentColor;">26</span>
</div>
</div></body></html>
